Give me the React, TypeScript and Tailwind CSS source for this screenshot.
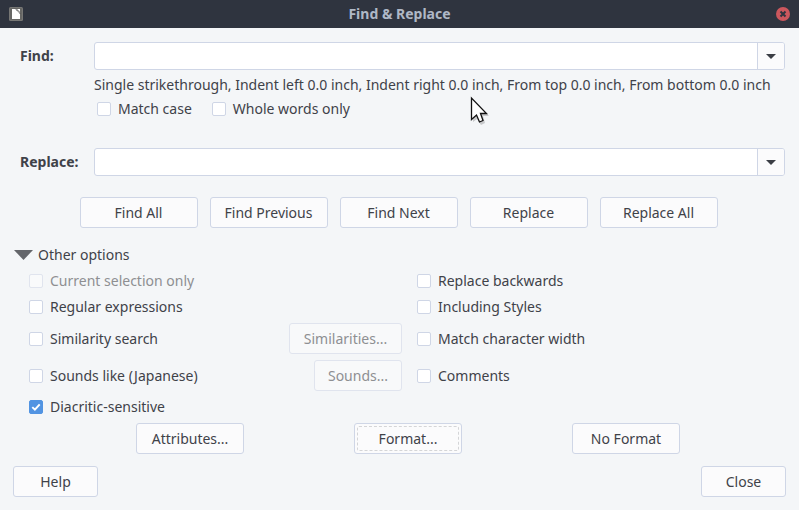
import type { ReactNode } from "react";

function Button({ children, className = "", disabled = false }: { children: ReactNode; className?: string; disabled?: boolean }) {
  return (
    <button
      type="button"
      disabled={disabled}
      className={`flex h-[31px] items-center justify-center rounded-[3px] border border-[#cfd6e6] bg-[#fbfbfc] whitespace-nowrap disabled:border-[#e0e4ee] disabled:bg-[#f8f9fa] disabled:text-[#8e8f92] ${className}`}
    >
      {children}
    </button>
  );
}

function Check({ label, checked = false, disabled = false }: { label: string; checked?: boolean; disabled?: boolean }) {
  return (
    <label className={`flex items-center gap-[7px] whitespace-nowrap ${disabled ? "text-[#8e8f92]" : ""}`}>
      <span className="grid size-[14px] shrink-0">
        <input
          type="checkbox"
          defaultChecked={checked}
          disabled={disabled}
          className="peer col-start-1 row-start-1 size-[14px] appearance-none rounded-[2px] border border-[#cfd6e6] bg-white checked:border-[#5294e2] checked:bg-[#5294e2] disabled:border-[#e0e4ee] disabled:bg-[#f9fafb]"
        />
        <svg viewBox="0 0 14 14" className="pointer-events-none invisible col-start-1 row-start-1 size-[14px] peer-checked:visible" aria-hidden="true">
          <path d="M3.3 7.1 5.9 9.6 10.7 4.4" fill="none" stroke="#fff" strokeWidth="2" />
        </svg>
      </span>
      {label}
    </label>
  );
}

function Combo({ id, label }: { id: string; label: string }) {
  return (
    <div className="flex items-center pr-[14px] pl-5">
      <label htmlFor={id} className="w-[74px] shrink-0 font-bold">
        {label}
      </label>
      <div className="flex h-7 flex-1 overflow-hidden rounded-[3px] border border-[#cfd6e6] bg-white">
        <input id={id} type="text" className="min-w-0 flex-1 px-2 outline-none" />
        <button type="button" aria-label={`${label} history`} className="flex w-[27px] items-center justify-center border-l border-[#cfd6e6] bg-[#fbfbfc]">
          <svg width="10" height="5" viewBox="0 0 10 5" aria-hidden="true">
            <path d="M0 0H10L5 5Z" fill="#3b3e45" />
          </svg>
        </button>
      </div>
    </div>
  );
}

export default function App() {
  return (
    <div className="min-h-screen bg-[#f4f6f8] pb-[13px] font-['Noto_Sans',sans-serif] text-[14px] leading-5 text-[#3f4249]">
      <header className="flex h-7 items-center justify-between bg-[#2f343f] px-[9px] text-[#afb8c6]">
        <svg width="14" height="14" viewBox="0 0 14 14" aria-hidden="true">
          <rect width="14" height="14" rx="1.5" fill="#777775" />
          <rect x="1" y="1" width="12" height="12" rx="1" fill="#676765" />
          <path d="M3 2H7L11 6V12H3Z" fill="#fff" />
          <path d="M8 2H11V5Z" fill="#fff" />
          <path d="M6 1.5 11.5 7" stroke="#555" strokeWidth="1" strokeDasharray="1.5 .6" />
        </svg>
        <h1 className="font-bold">Find &amp; Replace</h1>
        <button type="button" aria-label="Close window" className="size-[14px]">
          <svg width="14" height="14" viewBox="0 0 14 14" aria-hidden="true">
            <circle cx="7" cy="7" r="7" fill="#cc575d" />
            <path d="M4.5 4.5 9.5 9.5M9.5 4.5 4.5 9.5" stroke="#2f343f" strokeWidth="2" />
          </svg>
        </button>
      </header>

      <main>
        <div className="pt-[14px]">
          <Combo id="find" label="Find:" />
        </div>
        <p className="mt-[5px] pl-[94px] whitespace-nowrap">
          Single strikethrough, Indent left 0.0 inch, Indent right 0.0 inch, From top 0.0 inch, From bottom 0.0 inch
        </p>
        <div className="mt-1 flex gap-5 pl-[97px]">
          <Check label="Match case" />
          <Check label="Whole words only" />
        </div>
        <div className="pt-[29px]">
          <Combo id="replace" label="Replace:" />
        </div>

        <div className="mt-[21px] flex justify-center gap-3 pr-[2px]">
          <Button className="w-[118px]">Find All</Button>
          <Button className="w-[118px]">Find Previous</Button>
          <Button className="w-[118px]">Find Next</Button>
          <Button className="w-[118px]">Replace</Button>
          <Button className="w-[118px]">Replace All</Button>
        </div>

        <button type="button" aria-expanded="true" className="mt-[14px] ml-[14px] flex h-[26px] items-center gap-[5px]">
          <svg width="19" height="10" viewBox="0 0 19 10" aria-hidden="true">
            <path d="M0 0H19L9.500 10Z" fill="#64666b" />
          </svg>
          Other options
        </button>

        <div className="grid grid-cols-2 grid-rows-[26px_26px_37px_37px_26px] items-center gap-x-[15px] pr-[9px] pl-[29px]">
          <Check label="Current selection only" disabled />
          <Check label="Replace backwards" />
          <Check label="Regular expressions" />
          <Check label="Including Styles" />
          <div className="flex items-center justify-between">
            <Check label="Similarity search" />
            <Button disabled className="w-[113px]">Similarities...</Button>
          </div>
          <Check label="Match character width" />
          <div className="flex items-center justify-between">
            <Check label="Sounds like (Japanese)" />
            <Button disabled className="w-[88px]">Sounds...</Button>
          </div>
          <Check label="Comments" />
          <Check label="Diacritic-sensitive" checked />
        </div>

        <div className="mt-[3px] grid grid-cols-3 justify-items-center pr-16 pl-[81px]">
          <Button className="w-[108px]">Attributes...</Button>
          <Button className="w-[108px] p-[2px]">
            <span className="flex size-full items-center justify-center rounded-[2px] border border-dashed border-[#d4d5d7]">Format...</span>
          </Button>
          <Button className="w-[108px]">No Format</Button>
        </div>
      </main>

      <footer className="mt-3 flex justify-between px-[13px]">
        <Button className="w-[85px]">Help</Button>
        <Button className="w-[85px]">Close</Button>
      </footer>

      <svg width="20" height="30" viewBox="0 0 20 30" className="pointer-events-none absolute top-[96px] left-[470px]" aria-hidden="true">
        <path d="M3 4V26L7 23L11 29L15 27L13 20H19Z" fill="#000" opacity=".18" />
        <path d="M1.500 2V23.500L6.500 19L9.500 26L13 24.500L10.500 17.500H16.500Z" fill="#fff" stroke="#111" strokeWidth="1.300" />
      </svg>
    </div>
  );
}
